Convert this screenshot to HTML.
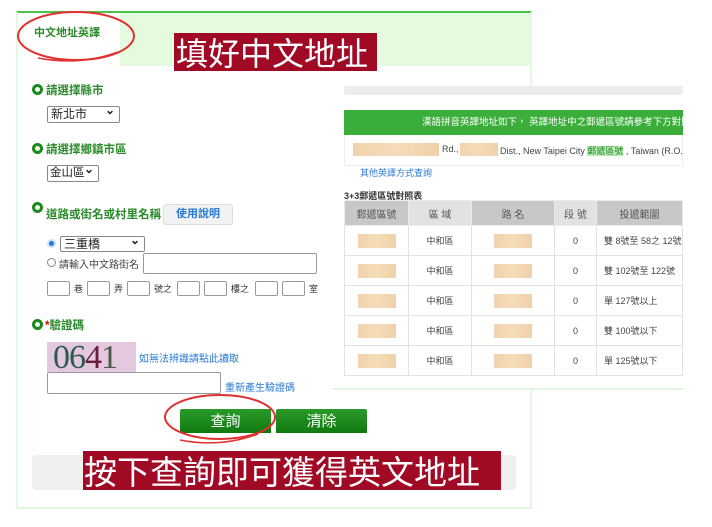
<!DOCTYPE html>
<html><head><meta charset="utf-8"><style>
*{margin:0;padding:0;box-sizing:border-box}
body{width:712px;height:527px;background:#fff;position:relative;overflow:hidden;font-family:"Liberation Sans","Noto Sans CJK TC",sans-serif;font-size:11px;color:#333}
.a{position:absolute}
.lbl{color:#2a8a2a;font-weight:bold;font-size:11.5px}
.dot{position:absolute;width:11px;height:11px;border:3px solid #1a8a1a;border-radius:50%}
.sel{position:absolute;border:1px solid #888;border-radius:2px;background:#fff;font-size:12px;padding-left:3px;line-height:15px;color:#222;white-space:nowrap;overflow:hidden}
.sel:after{content:"⌄";position:absolute;right:4px;top:-4px;font-size:12px;font-weight:bold}
.box{position:absolute;border:1px solid #999;background:#fff;border-radius:2px}
.lnk{color:#2a7ad6;font-size:10px}
.blur{background:linear-gradient(90deg,#f1d3ad,#f5dcb9,#efd0a8);position:absolute}
table{border-collapse:collapse}
td{border:1px solid #e2e2e2;height:30px;text-align:center;font-size:9px;color:#444}
th{height:25px;font-weight:normal;font-size:10px;color:#555;border:1px solid #ececec}
.btn{position:absolute;background:linear-gradient(#2a9a2a,#107a10);color:#fff;font-size:15px;text-align:center;line-height:26px;border-radius:2px 2px 0 0}
.red{position:absolute;background:#a00a25;color:#fff;font-family:"Noto Sans CJK TC",sans-serif;white-space:nowrap}
</style></head><body>
<div class="a" style="left:16px;top:11px;width:516px;height:498px;border:2px solid #e2f8e0;border-top:2px solid #4cc04c"></div>
<div class="a" style="left:120px;top:13px;width:410px;height:53px;background:#e4fbe0"></div>
<div class="a lbl" style="left:34px;top:24px;font-size:11px">中文地址英譯</div>

<div class="dot" style="left:32px;top:84px"></div><div class="a lbl" style="left:46px;top:82px">請選擇縣市</div>
<div class="sel" style="left:47px;top:106px;width:73px;height:17px">新北市</div>
<div class="dot" style="left:32px;top:143px"></div><div class="a lbl" style="left:46px;top:141px">請選擇鄉鎮市區</div>
<div class="sel" style="left:47px;top:165px;width:52px;height:17px;padding-left:2px;font-size:11.5px">金山區</div>
<div class="dot" style="left:32px;top:202px"></div><div class="a lbl" style="left:46px;top:206px">道路或街名或村里名稱</div>
<div class="a" style="left:163px;top:204px;width:70px;height:21px;background:#f2f2f2;border:1px solid #ddd;border-radius:3px;color:#2a7ad6;font-weight:bold;font-size:11px;text-align:center;line-height:19px">使用說明</div>
<div class="a" style="left:47px;top:239px;width:9px;height:9px;border-radius:50%;background:#2a7ad6;border:2px solid #cfe2fb"></div>
<div class="sel" style="left:60px;top:236px;width:85px;height:16px">三重橋</div>
<div class="a" style="left:47px;top:258px;width:9px;height:9px;border-radius:50%;border:1px solid #888"></div>
<div class="a" style="left:59px;top:256px;font-size:10px;color:#444">請輸入中文路街名</div>
<div class="box" style="left:143px;top:253px;width:174px;height:21px"></div>
<div class="box" style="left:47px;top:281px;width:23px;height:15px"></div><div class="a" style="left:74px;top:282px;font-size:9px">巷</div>
<div class="box" style="left:87px;top:281px;width:23px;height:15px"></div><div class="a" style="left:114px;top:282px;font-size:9px">弄</div>
<div class="box" style="left:127px;top:281px;width:23px;height:15px"></div><div class="a" style="left:154px;top:282px;font-size:9px">號之</div>
<div class="box" style="left:177px;top:281px;width:23px;height:15px"></div>
<div class="box" style="left:204px;top:281px;width:23px;height:15px"></div><div class="a" style="left:231px;top:282px;font-size:9px">樓之</div>
<div class="box" style="left:255px;top:281px;width:23px;height:15px"></div>
<div class="box" style="left:282px;top:281px;width:23px;height:15px"></div><div class="a" style="left:309px;top:282px;font-size:9px">室</div>

<div class="dot" style="left:32px;top:319px"></div><div class="a lbl" style="left:45px;top:317px"><span style="color:#d00">*</span>驗證碼</div>
<div class="a" style="left:47px;top:342px;width:89px;height:30px;background:#e3c8e0;font-family:'Liberation Serif',serif;font-size:34px;line-height:32px;letter-spacing:-1px;padding-left:6px;overflow:hidden"><span style="color:#2d5a50">06</span><span style="color:#6a1a3a">4</span><span style="color:#4a5a4a">1</span></div>
<div class="a lnk" style="left:139px;top:350px">如無法辨識請點此讀取</div>
<div class="box" style="left:47px;top:372px;width:174px;height:22px"></div>
<div class="a lnk" style="left:225px;top:379px">重新產生驗證碼</div>

<div class="btn" style="left:180px;top:409px;width:91px;height:24px">查詢</div>
<div class="btn" style="left:276px;top:409px;width:91px;height:24px">清除</div>
<div class="a" style="left:32px;top:455px;width:484px;height:35px;background:#efefef;border-radius:4px"></div>

<div class="a" style="left:340px;top:86px;width:372px;height:302px;background:#fff"></div>
<div class="a" style="left:344px;top:86px;width:339px;height:9px;background:#ececec;border-radius:0 0 3px 3px"></div>
<div class="a" style="left:344px;top:110px;width:339px;height:25px;background:#3aad3a;color:#fff;font-size:9.5px;line-height:25px;padding-left:78px;white-space:nowrap;overflow:hidden">漢語拼音英譯地址如下， 英譯地址中之郵遞區號請參考下方對照表</div>
<div class="a" style="left:344px;top:135px;width:339px;height:31px;border:1px solid #eee;border-top:none"></div>
<div class="blur" style="left:353px;top:143px;width:86px;height:13px"></div>
<div class="a" style="left:442px;top:144px;font-size:9px;color:#444">Rd.,</div>
<div class="blur" style="left:460px;top:143px;width:38px;height:13px"></div>
<div class="a" style="left:500px;top:144px;font-size:9px;color:#444;white-space:nowrap">Dist., New Taipei City <span style="background:#b8ecb8;color:#2a8a2a">郵遞區號</span> , Taiwan (R.O.</div>
<div class="a lnk" style="left:360px;top:166px;font-size:9px">其他英譯方式查詢</div>
<div class="a" style="left:344px;top:189px;font-size:9px;font-weight:bold;color:#333">3+3郵遞區號對照表</div>
<table class="a" style="left:344px;top:200px;width:339px">
<tr><th style="width:64px;background:#c8c8c8">郵遞區號</th><th style="width:63px;background:#e2e2e2">區 域</th><th style="width:83px;background:#c8c8c8">路 名</th><th style="width:42px;background:#e2e2e2">段 號</th><th style="background:#c8c8c8">投遞範圍</th></tr>
<tr><td><div class="blur" style="position:relative;width:38px;height:14px;margin:auto"></div></td><td>中和區</td><td><div class="blur" style="position:relative;width:38px;height:14px;margin:auto"></div></td><td>0</td><td style="text-align:left;padding-left:7px">雙 8號至 58之 12號</td></tr>
<tr><td><div class="blur" style="position:relative;width:38px;height:14px;margin:auto"></div></td><td>中和區</td><td><div class="blur" style="position:relative;width:38px;height:14px;margin:auto"></div></td><td>0</td><td style="text-align:left;padding-left:7px">雙 102號至 122號</td></tr>
<tr><td><div class="blur" style="position:relative;width:38px;height:14px;margin:auto"></div></td><td>中和區</td><td><div class="blur" style="position:relative;width:38px;height:14px;margin:auto"></div></td><td>0</td><td style="text-align:left;padding-left:7px">單 127號以上</td></tr>
<tr><td><div class="blur" style="position:relative;width:38px;height:14px;margin:auto"></div></td><td>中和區</td><td><div class="blur" style="position:relative;width:38px;height:14px;margin:auto"></div></td><td>0</td><td style="text-align:left;padding-left:7px">雙 100號以下</td></tr>
<tr><td><div class="blur" style="position:relative;width:38px;height:14px;margin:auto"></div></td><td>中和區</td><td><div class="blur" style="position:relative;width:38px;height:14px;margin:auto"></div></td><td>0</td><td style="text-align:left;padding-left:7px">單 125號以下</td></tr>
</table>
<div class="a" style="left:333px;top:388px;width:350px;height:2px;background:#e2f8e0"></div>

<div class="red" style="left:174px;top:33px;width:203px;height:38px;font-size:32px;line-height:38px;padding-left:2px">填好中文地址</div>
<div class="red" style="left:83px;top:451px;width:418px;height:39px;font-size:33px;line-height:39px;padding-left:1px">按下查詢即可獲得英文地址</div>
<svg class="a" style="left:0;top:0" width="712" height="527">
<ellipse cx="76" cy="36" rx="58" ry="24" fill="none" stroke="#e03030" stroke-width="2"/>
<path d="M38 58 Q80 66 118 52" fill="none" stroke="#e03030" stroke-width="1.5"/>
<ellipse cx="220" cy="417" rx="55" ry="22" fill="none" stroke="#e03030" stroke-width="2"/>
<path d="M180 440 Q220 448 258 434" fill="none" stroke="#e03030" stroke-width="1.5"/>
</svg>
</body></html>
